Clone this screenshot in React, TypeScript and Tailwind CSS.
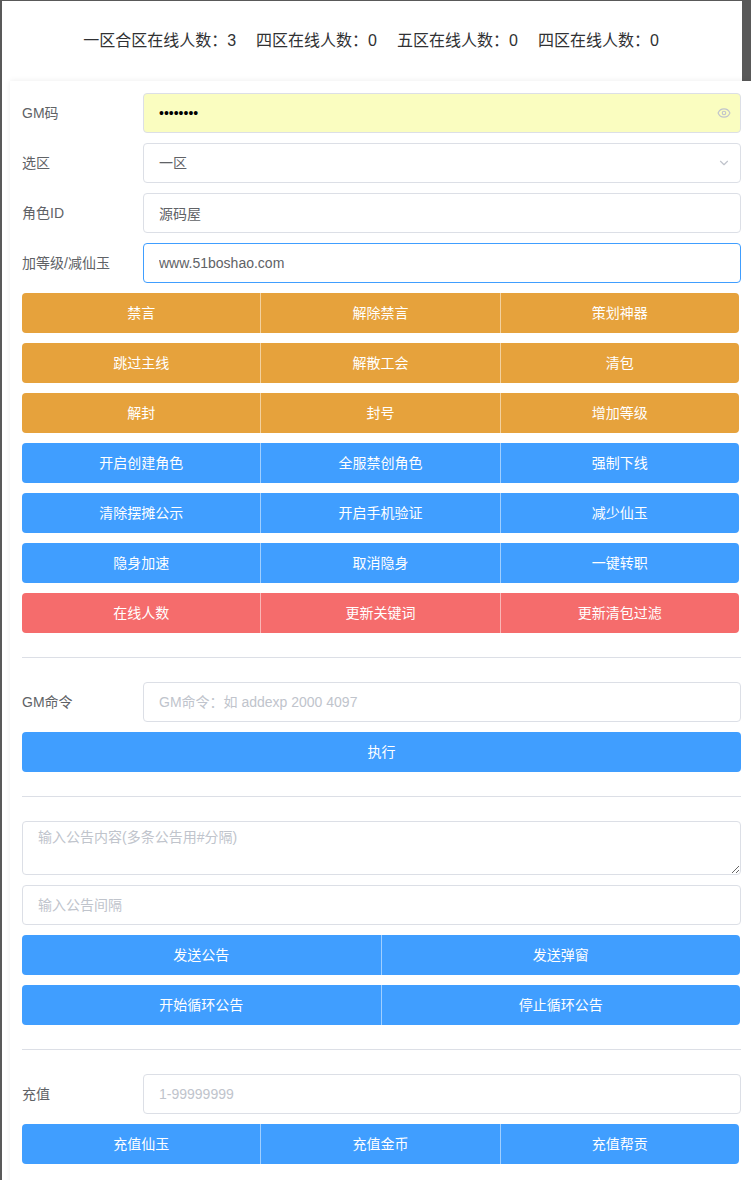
import React from 'react';
import { ChevronDown, Eye } from 'lucide-react';

type Tone = 'warning' | 'primary' | 'danger';

const toneClass: Record<Tone, string> = {
  warning: 'bg-[#e6a23c]',
  primary: 'bg-[#409eff]',
  danger: 'bg-[#f56c6c]',
};

const onlineStats = [
  { zone: '一区合区', count: 3 },
  { zone: '四区', count: 0 },
  { zone: '五区', count: 0 },
  { zone: '四区', count: 0 },
];

const actionRows: { tone: Tone; labels: string[] }[] = [
  { tone: 'warning', labels: ['禁言', '解除禁言', '策划神器'] },
  { tone: 'warning', labels: ['跳过主线', '解散工会', '清包'] },
  { tone: 'warning', labels: ['解封', '封号', '增加等级'] },
  { tone: 'primary', labels: ['开启创建角色', '全服禁创角色', '强制下线'] },
  { tone: 'primary', labels: ['清除摆摊公示', '开启手机验证', '减少仙玉'] },
  { tone: 'primary', labels: ['隐身加速', '取消隐身', '一键转职'] },
  { tone: 'danger', labels: ['在线人数', '更新关键词', '更新清包过滤'] },
];

const ButtonGroup: React.FC<{ tone: Tone; labels: string[]; className?: string }> = ({
  tone,
  labels,
  className = '',
}) => (
  <div className={`flex h-10 overflow-hidden rounded-[4px] ${className}`}>
    {labels.map((label, i) => (
      <button
        key={label}
        className={`flex-1 text-sm text-white ${toneClass[tone]} ${
          i > 0 ? 'border-l border-white/50' : ''
        }`}
      >
        {label}
      </button>
    ))}
  </div>
);

const FormItem: React.FC<{ label: string; children: React.ReactNode }> = ({ label, children }) => (
  <div className="flex h-10 items-center">
    <label className="w-[121px] shrink-0 text-sm text-[#606266]">{label}</label>
    <div className="relative h-10 flex-1">{children}</div>
  </div>
);

const inputBase =
  'h-10 w-full rounded-[4px] border border-[#dcdfe6] bg-white px-[15px] text-sm text-[#606266] outline-none placeholder:text-[#c0c4cc]';

const Divider = () => <div className="my-6 h-px bg-[#dcdfe6]" />;

export default function App() {
  return (
    <div
      className="min-h-[1180px] border-l-2 border-[#595959] bg-white"
      style={{ fontFamily: '"Liberation Sans", "Noto Sans CJK SC", sans-serif' }}
    >
      <div className="flex h-[81px] items-center justify-center gap-5 border-t border-r-[9px] border-[#595959] bg-white pr-[2px] text-base text-[#303133]">
        {onlineStats.map((s, i) => (
          <span key={i}>
            {s.zone}在线人数：{s.count}
          </span>
        ))}
      </div>

      <div className="ml-2 bg-white pt-3 pr-[10px] pb-6 pl-3 shadow-[0_0_6px_rgba(0,0,0,0.08)]">
        <div className="flex flex-col gap-[10px]">
          <FormItem label="GM码">
            <input
              type="password"
              defaultValue="12345678"
              className={`${inputBase} !bg-[#fafdc0] text-black`}
            />
            <Eye className="absolute top-1/2 right-[10px] h-[14px] w-[14px] -translate-y-1/2 text-[#c0c4cc]" />
          </FormItem>
          <FormItem label="选区">
            <div className={`${inputBase} flex items-center`}>一区</div>
            <ChevronDown className="absolute top-1/2 right-[10px] h-[14px] w-[14px] -translate-y-1/2 text-[#c0c4cc]" />
          </FormItem>
          <FormItem label="角色ID">
            <input defaultValue="源码屋" className={inputBase} />
          </FormItem>
          <FormItem label="加等级/减仙玉">
            <input defaultValue="www.51boshao.com" className={`${inputBase} !border-[#409eff]`} />
          </FormItem>
          {actionRows.map((row, i) => (
            <ButtonGroup key={i} tone={row.tone} labels={row.labels} className="mr-[2px]" />
          ))}
        </div>

        <Divider />

        <div className="flex flex-col gap-[10px]">
          <FormItem label="GM命令">
            <input placeholder="GM命令：如 addexp 2000 4097" className={inputBase} />
          </FormItem>
          <ButtonGroup tone="primary" labels={['执行']} />
        </div>

        <Divider />

        <div className="flex flex-col gap-[10px]">
          <textarea
            rows={2}
            placeholder="输入公告内容(多条公告用#分隔)"
            className="block h-[54px] w-full rounded-[4px] border border-[#dcdfe6] px-[15px] py-[5px] text-sm leading-[1.5] text-[#606266] outline-none placeholder:text-[#c0c4cc]"
          />
          <input placeholder="输入公告间隔" className={inputBase} />
          <ButtonGroup tone="primary" labels={['发送公告', '发送弹窗']} className="mr-px" />
          <ButtonGroup tone="primary" labels={['开始循环公告', '停止循环公告']} className="mr-px" />
        </div>

        <Divider />

        <div className="flex flex-col gap-[10px]">
          <FormItem label="充值">
            <input placeholder="1-99999999" className={inputBase} />
          </FormItem>
          <ButtonGroup tone="primary" labels={['充值仙玉', '充值金币', '充值帮贡']} className="mr-[2px]" />
        </div>
      </div>
    </div>
  );
}
